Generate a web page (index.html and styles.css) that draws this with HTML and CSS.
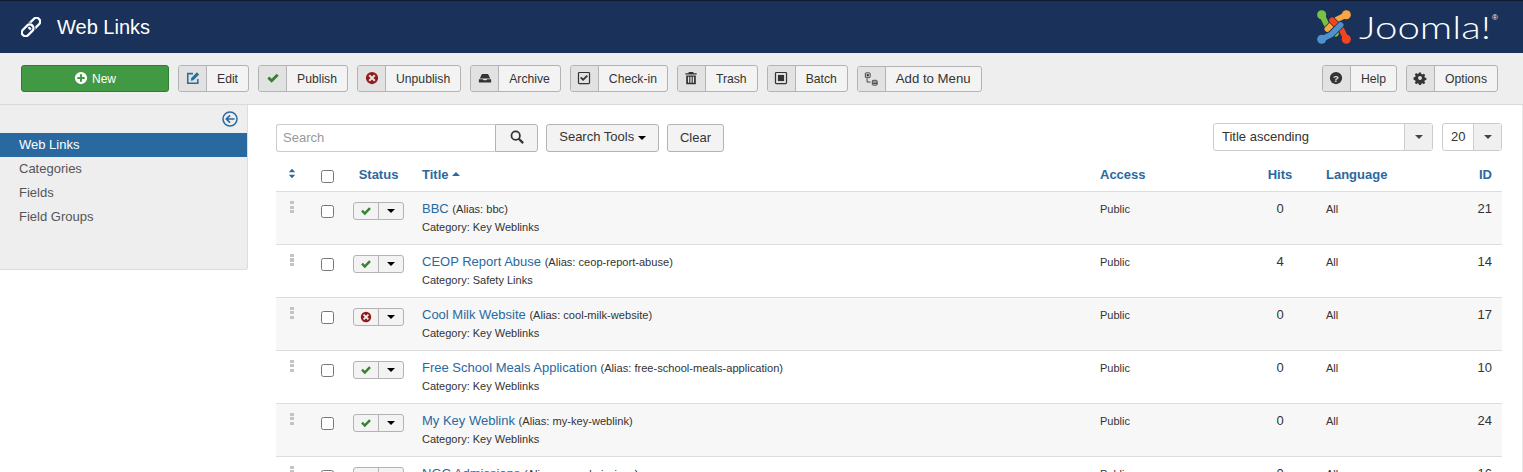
FILE: index.html
```html
<!DOCTYPE html>
<html lang="en">
<head>
    <meta charset="UTF-8">
    <title>Web Links</title>
    <link rel="stylesheet" href="styles.css">
</head>
<body>
    <svg class="sprites" width="0" height="0">
        <symbol id="i-check" viewBox="0 0 16 16"><path d="M1.500 8.600 3.800 6.300 6.400 8.900 12.200 3.100 14.500 5.400 6.400 13.500z"/></symbol>
        <symbol id="i-cancel" viewBox="0 0 16 16"><path fill-rule="evenodd" d="M8 1a7 7 0 1 0 0 14A7 7 0 0 0 8 1zM5.600 4 8 6.400 10.400 4 12 5.600 9.600 8 12 10.400 10.400 12 8 9.600 5.600 12 4 10.400 6.400 8 4 5.600z"/></symbol>
    </svg>

    <header class="topbar">
        <div class="page-title">
            <svg class="title-icon" viewBox="0 0 24 24" fill="none" stroke-width="2.800">
                <rect class="link-loop" x="8" y="3.500" width="16" height="9" rx="4.500" transform="rotate(-45 16 8)"/>
                <rect class="link-gap" x="0" y="11.500" width="16" height="9" rx="4.500" transform="rotate(-45 8 16)"/>
                <rect class="link-loop" x="0" y="11.500" width="16" height="9" rx="4.500" transform="rotate(-45 8 16)"/>
            </svg>
            <h1>Web Links</h1>
        </div>
        <div class="logo">
            <svg class="logo-mark" viewBox="0 0 38 38" fill="none" stroke-linecap="round" stroke-linejoin="round" stroke-width="6">
                <path class="mark-gap" d="M6 6 11 16 21 26"/>
                <path stroke="#7ac143" d="M6 6 11 16 21 26"/>
                <path class="mark-gap" d="M32 6 22 11 12 21"/>
                <path stroke="#f9a541" d="M32 6 22 11 12 21"/>
                <path class="mark-gap" d="M32 32 27 22 17 12"/>
                <path stroke="#f44321" d="M32 32 27 22 17 12"/>
                <path class="mark-gap" d="M6 32 16 27 26 17"/>
                <path stroke="#5091cd" d="M6 32 16 27 26 17"/>
                <circle cx="6" cy="6" r="4.800" fill="#7ac143"/>
                <circle cx="32" cy="6" r="4.800" fill="#f9a541"/>
                <circle cx="32" cy="32" r="4.800" fill="#f44321"/>
                <circle cx="6" cy="32" r="4.800" fill="#5091cd"/>
            </svg>
            <span class="logo-text">Joomla!</span><span class="logo-reg">®</span>
        </div>
    </header>

    <div class="toolbar">
        <button class="btn-new"><svg class="tb-svg" viewBox="0 0 16 16"><path fill="#fff" fill-rule="evenodd" d="M8 1a7 7 0 1 0 0 14A7 7 0 0 0 8 1zM6.800 3.800h2.400v3h3v2.400h-3v3H6.800v-3h-3V6.800h3z"/></svg><span>New</span></button>
        <button class="tb-btn"><span class="tb-icon"><svg class="tb-svg" viewBox="0 0 16 16"><path fill="none" stroke="#2a6f97" stroke-width="1.800" d="M13.500 9v5H2V3h6"/><path fill="#2a6f97" d="M6 8 12.500 1.500 15 4 8.500 10.500 5.500 11z"/></svg></span><span class="tb-label">Edit</span></button>
        <button class="tb-btn"><span class="tb-icon"><svg class="tb-svg green"><use href="#i-check"/></svg></span><span class="tb-label">Publish</span></button>
        <button class="tb-btn"><span class="tb-icon"><svg class="tb-svg red"><use href="#i-cancel"/></svg></span><span class="tb-label">Unpublish</span></button>
        <button class="tb-btn"><span class="tb-icon"><svg class="tb-svg" viewBox="0 0 16 16"><path fill="#333" d="M4.500 3.500h7L14 8.500H2zM1 9.500h4.500l1 1.200h3l1-1.200H15V13H1z"/></svg></span><span class="tb-label">Archive</span></button>
        <button class="tb-btn"><span class="tb-icon"><svg class="tb-svg" viewBox="0 0 16 16"><rect x="1.700" y="1.700" width="12.600" height="12.600" rx="1" fill="none" stroke="#333" stroke-width="1.400"/><path fill="#333" d="M3.500 8 5 6.500 7 8.500 11 4.500 12.500 6 7 11.500z"/></svg></span><span class="tb-label">Check-in</span></button>
        <button class="tb-btn"><span class="tb-icon"><svg class="tb-svg" viewBox="0 0 16 16"><path fill="#333" fill-rule="evenodd" d="M5.500 1h5l.5 1.500h3.500V4h-13V2.500H5zM2.500 5h11v10h-11zM4.500 6.500v7h1.500v-7zM7.250 6.500v7h1.500v-7zM10 6.500v7h1.500v-7z"/></svg></span><span class="tb-label">Trash</span></button>
        <button class="tb-btn"><span class="tb-icon"><svg class="tb-svg" viewBox="0 0 16 16"><rect x="1.700" y="1.700" width="12.600" height="12.600" rx="1" fill="none" stroke="#333" stroke-width="1.400"/><rect x="4.500" y="4.500" width="7" height="7" fill="#333"/></svg></span><span class="tb-label">Batch</span></button>
        <button class="tb-btn tb-menu"><span class="tb-icon"><svg class="tb-svg" viewBox="0 0 16 16" fill="none" stroke="#333"><rect x="1.500" y="1" width="5.500" height="5.500" rx=".8"/><rect x="3" y="2.500" width="2.500" height="2.500" fill="#333" stroke="none"/><rect x="9.500" y="9.500" width="5.500" height="5.500" rx=".8"/><path d="M10 11.500h5M10 13.200h5M3.500 7.500v4h4"/></svg></span><span class="tb-label">Add to Menu</span></button>
        <div class="tb-right">
            <button class="tb-btn"><span class="tb-icon"><svg class="tb-svg" viewBox="0 0 16 16"><circle cx="8" cy="8" r="7" fill="#333"/><text x="8" y="12" class="help-mark">?</text></svg></span><span class="tb-label">Help</span></button>
            <button class="tb-btn"><span class="tb-icon"><svg class="tb-svg" viewBox="-1 -1 18 18"><path fill="#333" fill-rule="evenodd" d="M6.700 1h2.600l.4 2 1.500.6 1.700-1.100 1.800 1.800-1.100 1.700.6 1.500 2 .4v2.600l-2 .4-.6 1.500 1.100 1.700-1.800 1.800-1.700-1.100-1.500.6-.4 2H6.700l-.4-2-1.500-.6-1.700 1.100-1.800-1.800 1.100-1.700-.6-1.500-2-.4V7.100l2-.4.6-1.500-1.100-1.700 1.800-1.800 1.700 1.100 1.500-.6zM8 5.500a2.500 2.500 0 1 0 0 5 2.500 2.500 0 0 0 0-5z"/></svg></span><span class="tb-label">Options</span></button>
        </div>
    </div>

    <div class="main">
        <aside class="sidebar">
            <div class="collapse-row">
                <svg class="collapse-icon" viewBox="0 0 16 16" fill="none" stroke="#2a69a0" stroke-width="1.500"><circle cx="8" cy="8" r="7"/><path stroke-width="1.700" d="M12.500 8H4.500M8 4.300 4.300 8 8 11.700"/></svg>
            </div>
            <nav class="side-nav">
                <a class="active">Web Links</a>
                <a>Categories</a>
                <a>Fields</a>
                <a>Field Groups</a>
            </nav>
        </aside>

        <section class="content">
            <div class="filters">
                <div class="search-group">
                    <input class="search-input" placeholder="Search">
                    <button class="search-btn"><svg viewBox="0 0 16 16" width="14" height="14" fill="none" stroke="#333" stroke-width="2"><circle cx="6.500" cy="6.500" r="4.800"/><path stroke-width="2.600" d="M10 10l5 5"/></svg></button>
                </div>
                <button class="plain-btn tools">Search Tools <span class="caret"></span></button>
                <button class="plain-btn clear">Clear</button>
                <div class="filters-right">
                    <div class="fake-select order"><span class="val">Title ascending</span><span class="arrow"><span class="caret"></span></span></div>
                    <div class="fake-select limit"><span class="val">20</span><span class="arrow"><span class="caret"></span></span></div>
                </div>
            </div>

            <table class="list">
                <thead>
                    <tr>
                        <th class="c-order"><svg class="sort-icon" viewBox="0 0 10 12"><path fill="#2a69a0" d="M5 0 9 4.500H1zM1 7.500h8L5 12z"/></svg></th>
                        <th class="c-check"><input type="checkbox"></th>
                        <th class="c-status">Status</th>
                        <th class="c-title">Title <span class="caret up"></span></th>
                        <th class="c-access">Access</th>
                        <th class="c-hits">Hits</th>
                        <th class="c-lang">Language</th>
                        <th class="c-id">ID</th>
                    </tr>
                </thead>
                <tbody>
                    <tr>
                        <td class="c-order"><span class="drag"></span></td>
                        <td class="c-check"><input type="checkbox"></td>
                        <td class="c-status"><span class="state"><span class="state-l"><svg class="green"><use href="#i-check"/></svg></span><span class="state-r"><span class="caret"></span></span></span></td>
                        <td class="c-title"><a>BBC</a> <span class="small">(Alias: bbc)</span><div class="small cat">Category: Key Weblinks</div></td>
                        <td class="c-access small">Public</td>
                        <td class="c-hits">0</td>
                        <td class="c-lang small">All</td>
                        <td class="c-id">21</td>
                    </tr>
                    <tr>
                        <td class="c-order"><span class="drag"></span></td>
                        <td class="c-check"><input type="checkbox"></td>
                        <td class="c-status"><span class="state"><span class="state-l"><svg class="green"><use href="#i-check"/></svg></span><span class="state-r"><span class="caret"></span></span></span></td>
                        <td class="c-title"><a>CEOP Report Abuse</a> <span class="small">(Alias: ceop-report-abuse)</span><div class="small cat">Category: Safety Links</div></td>
                        <td class="c-access small">Public</td>
                        <td class="c-hits">4</td>
                        <td class="c-lang small">All</td>
                        <td class="c-id">14</td>
                    </tr>
                    <tr>
                        <td class="c-order"><span class="drag"></span></td>
                        <td class="c-check"><input type="checkbox"></td>
                        <td class="c-status"><span class="state"><span class="state-l"><svg class="red"><use href="#i-cancel"/></svg></span><span class="state-r"><span class="caret"></span></span></span></td>
                        <td class="c-title"><a>Cool Milk Website</a> <span class="small">(Alias: cool-milk-website)</span><div class="small cat">Category: Key Weblinks</div></td>
                        <td class="c-access small">Public</td>
                        <td class="c-hits">0</td>
                        <td class="c-lang small">All</td>
                        <td class="c-id">17</td>
                    </tr>
                    <tr>
                        <td class="c-order"><span class="drag"></span></td>
                        <td class="c-check"><input type="checkbox"></td>
                        <td class="c-status"><span class="state"><span class="state-l"><svg class="green"><use href="#i-check"/></svg></span><span class="state-r"><span class="caret"></span></span></span></td>
                        <td class="c-title"><a>Free School Meals Application</a> <span class="small">(Alias: free-school-meals-application)</span><div class="small cat">Category: Key Weblinks</div></td>
                        <td class="c-access small">Public</td>
                        <td class="c-hits">0</td>
                        <td class="c-lang small">All</td>
                        <td class="c-id">10</td>
                    </tr>
                    <tr>
                        <td class="c-order"><span class="drag"></span></td>
                        <td class="c-check"><input type="checkbox"></td>
                        <td class="c-status"><span class="state"><span class="state-l"><svg class="green"><use href="#i-check"/></svg></span><span class="state-r"><span class="caret"></span></span></span></td>
                        <td class="c-title"><a>My Key Weblink</a> <span class="small">(Alias: my-key-weblink)</span><div class="small cat">Category: Key Weblinks</div></td>
                        <td class="c-access small">Public</td>
                        <td class="c-hits">0</td>
                        <td class="c-lang small">All</td>
                        <td class="c-id">24</td>
                    </tr>
                    <tr>
                        <td class="c-order"><span class="drag"></span></td>
                        <td class="c-check"><input type="checkbox"></td>
                        <td class="c-status"><span class="state"><span class="state-l"><svg class="green"><use href="#i-check"/></svg></span><span class="state-r"><span class="caret"></span></span></span></td>
                        <td class="c-title"><a>NGC Admissions</a> <span class="small">(Alias: ngc-admissions)</span><div class="small cat">Category: Key Weblinks</div></td>
                        <td class="c-access small">Public</td>
                        <td class="c-hits">0</td>
                        <td class="c-lang small">All</td>
                        <td class="c-id">16</td>
                    </tr>
                </tbody>
            </table>
        </section>
    </div>
</body>
</html>
```

FILE: styles.css
```css
* {
    box-sizing: border-box;
}
html, body {
    height: 472px;
    overflow: hidden;
}
body {
    margin: 0;
    font-family: "Liberation Sans", Arial, sans-serif;
    font-size: 13px;
    line-height: 18px;
    color: #333;
    background: #fff;
}
.sprites {
    position: absolute;
}
button {
    font-family: inherit;
    font-size: 13px;
    color: #333;
    padding: 0;
    cursor: pointer;
}

/* top bar */
.topbar {
    height: 53px;
    background: #1a3159;
    border-top: 1px solid #0d1a30;
    display: flex;
    align-items: center;
    justify-content: space-between;
    padding: 0 25px 0 21px;
}
.page-title {
    display: flex;
    align-items: center;
}
.title-icon {
    width: 20px;
    height: 20px;
}
.link-loop {
    stroke: #fff;
}
.link-gap {
    stroke: #1a3159;
    stroke-width: 5;
}
h1 {
    margin: 0 0 0 16px;
    font-size: 20px;
    line-height: 26px;
    font-weight: 400;
    color: #fff;
}
.logo {
    display: flex;
    align-items: center;
    color: #fff;
}
.logo-mark {
    width: 36px;
    height: 36px;
}
.mark-gap {
    stroke: #1a3159;
    stroke-width: 7.500;
}
.logo-text {
    width: 133px;
    margin-left: 7px;
    font-family: "Lato", sans-serif;
    font-size: 31px;
    line-height: 36px;
    font-weight: 300;
    transform: scaleX(1.3);
    transform-origin: left center;
    white-space: nowrap;
}
.logo-reg {
    font-size: 8px;
    align-self: flex-start;
    line-height: 12px;
    margin-top: 3px;
}

/* toolbar */
.toolbar {
    height: 52px;
    background: #eee;
    border-bottom: 1px solid #d9d9d9;
    display: flex;
    align-items: center;
    gap: 9px;
    padding: 0 25px 1px 21px;
}
.tb-right {
    margin-left: auto;
    display: flex;
    gap: 9px;
}
.btn-new {
    width: 148px;
    height: 27px;
    background: #419a43;
    border: 1px solid #2f7d32;
    border-radius: 3px;
    color: #fff;
    font-size: 12px;
    display: flex;
    align-items: center;
    justify-content: center;
    gap: 4px;
}
.btn-new span {
    padding-top: 1px;
}
.tb-btn {
    height: 27px;
    display: flex;
    background: #f3f3f3;
    border: 1px solid #b3b3b3;
    border-radius: 3px;
    font-size: 12.200px;
}
.tb-menu {
    height: 26px;
    margin-top: 1px;
    font-size: 13.200px;
}
.tb-icon {
    width: 28px;
    background: #e2e2e2;
    border-right: 1px solid #b3b3b3;
    display: flex;
    align-items: center;
    justify-content: center;
    border-radius: 2px 0 0 2px;
}
.tb-label {
    padding: 1px 10px 0;
    line-height: 25px;
}
.tb-menu .tb-label {
    padding: 0 10px;
    line-height: 24px;
}
.tb-svg {
    width: 14px;
    height: 14px;
    display: block;
}
.help-mark {
    font-family: "Liberation Sans", Arial, sans-serif;
    font-size: 11px;
    font-weight: 700;
    fill: #e2e2e2;
    text-anchor: middle;
}
.green {
    fill: #378137;
}
.red {
    fill: #941b1b;
}

/* layout */
.main {
    display: flex;
    align-items: flex-start;
}
.sidebar {
    width: 248px;
    height: 165px;
    flex: none;
    background: #eee;
    border-right: 1px solid #ddd;
    border-bottom: 1px solid #ddd;
    border-radius: 0 0 3px 0;
}
.collapse-row {
    height: 28px;
    display: flex;
    justify-content: flex-end;
    padding: 6px 9px 0 0;
}
.collapse-icon {
    width: 16px;
    height: 16px;
}
.side-nav a {
    display: block;
    height: 24px;
    line-height: 24px;
    padding-left: 19px;
    color: #555;
}
.side-nav a.active {
    background: #2a699f;
    color: #fff;
}
.content {
    flex: 1;
    min-width: 0;
    padding: 19px 20px 0 28px;
    border-right: 1px solid #e6e6e6;
}

/* filters */
.filters {
    display: flex;
    align-items: flex-start;
    height: 36px;
}
.search-group {
    display: flex;
    margin-right: 8px;
}
.search-input {
    width: 219px;
    height: 28px;
    border: 1px solid #ccc;
    border-right: 0;
    border-radius: 3px 0 0 3px;
    padding: 0 6px 2px;
    font-family: inherit;
    font-size: 13px;
    background: #fff;
}
.search-input::placeholder {
    color: #999;
}
.search-btn {
    width: 43px;
    height: 28px;
    background: #f3f3f3;
    border: 1px solid #b3b3b3;
    border-radius: 0 3px 3px 0;
    display: flex;
    align-items: flex-start;
    justify-content: center;
    padding-top: 5px;
}
.plain-btn {
    height: 28px;
    background: #f3f3f3;
    border: 1px solid #b3b3b3;
    border-radius: 3px;
}
.tools {
    width: 113px;
    margin-right: 8px;
    padding-bottom: 3px;
}
.clear {
    width: 57px;
    padding-bottom: 1px;
}
.caret {
    display: inline-block;
    width: 0;
    height: 0;
    vertical-align: middle;
    border-top: 4px solid #000;
    border-left: 4px solid transparent;
    border-right: 4px solid transparent;
}
.caret.up {
    border-top: 0;
    border-bottom: 4px solid #2a69a0;
    vertical-align: 3px;
}
.filters-right {
    margin-left: auto;
    display: flex;
    gap: 9px;
    margin-top: -1px;
}
.fake-select {
    height: 28px;
    display: flex;
    background: #fff;
    border: 1px solid #ccc;
    border-radius: 3px;
    line-height: 25px;
}
.fake-select .val {
    flex: 1;
    padding-left: 8px;
}
.fake-select .arrow {
    width: 28px;
    background: #f0f0f0;
    border-left: 1px solid #ccc;
    display: flex;
    align-items: center;
    justify-content: center;
}
.fake-select .caret {
    border-top-color: #444;
}
.order {
    width: 220px;
}
.limit {
    width: 60px;
}

/* table */
.list {
    width: 1226px;
    border-collapse: collapse;
    table-layout: fixed;
}
.list th {
    height: 31px;
    padding: 0 10px 1px;
    text-align: left;
    font-size: 13px;
    font-weight: 700;
    color: #2a69a0;
    border-bottom: 1px solid #ddd;
}
.list td {
    height: 53px;
    padding: 8px 10px;
    vertical-align: top;
    border-bottom: 1px solid #ddd;
}
.list tbody tr:nth-child(odd) td {
    background: #f7f7f7;
}
.list input[type="checkbox"] {
    width: 13px;
    height: 13px;
    margin: 5px 0 0;
    display: block;
}
.list th input[type="checkbox"] {
    margin: 4px 0 0;
}
.c-order {
    width: 32px;
}
.list .c-order {
    padding-left: 0;
    padding-right: 0;
    text-align: center;
}
.c-check {
    width: 45px;
}
.list .c-check {
    padding-left: 13px;
}
.c-status {
    width: 59px;
}
.list .c-status {
    padding-left: 0;
    padding-right: 8px;
    text-align: center;
}
.c-title {
    width: 678px;
}
.c-access {
    width: 154px;
}
.c-hits {
    width: 72px;
}
.list .c-hits {
    text-align: center;
}
.c-lang {
    width: 110px;
}
.c-id {
    width: 76px;
}
.list .c-id {
    text-align: right;
}
.sort-icon {
    width: 8px;
    height: 11px;
}
.drag {
    display: inline-block;
    width: 4px;
    height: 12px;
    margin-top: 1px;
    background: repeating-linear-gradient(#c4c4c4 0 3px, transparent 3px 4.500px);
}
.state {
    display: inline-flex;
    height: 18px;
    margin-top: 2px;
    background: #f3f3f3;
    border: 1px solid #b3b3b3;
    border-radius: 3px;
}
.state-l {
    width: 25px;
    border-right: 1px solid #b3b3b3;
    display: flex;
    align-items: center;
    justify-content: center;
}
.state-l svg {
    width: 12px;
    height: 12px;
}
.state-r {
    width: 24px;
    display: flex;
    align-items: center;
    justify-content: center;
}
.state-r .caret {
    border-top-color: #000;
}
.c-title a {
    color: #2a69a0;
}
.small {
    font-size: 11px;
}
.c-title span.small {
    font-size: 11.100px;
}
```
